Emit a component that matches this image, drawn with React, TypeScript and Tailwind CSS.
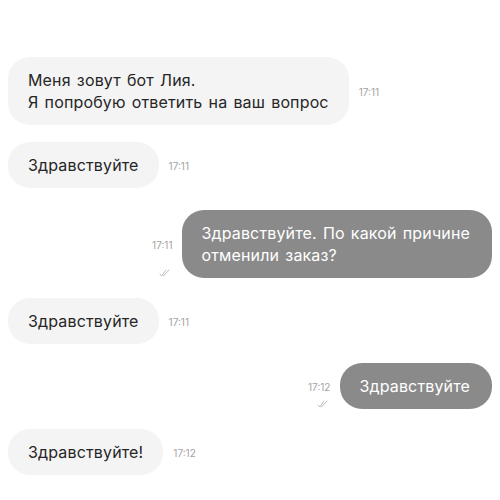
import React from 'react';

const Checks = () => (
  <svg width="12" height="8" viewBox="0 0 12 8" fill="none" stroke="#b5b5b5" strokeWidth="0.9" strokeLinecap="round">
    <path d="M1 5l1.8 2L7 1" />
    <path d="M4.5 7L10 1" />
  </svg>
);

const InBubble = ({ lines, time, mt }: { lines: string[]; time: string; mt: string }) => (
  <div className={`flex items-center ${mt}`}>
    <div className="bg-[#f4f4f4] rounded-[22px] px-5 py-[12px] text-[16px] leading-[22px] text-[#262626] tracking-[0.15px] [word-spacing:1.5px]">
      {lines.map((l) => (
        <div key={l}>{l}</div>
      ))}
    </div>
    <span className="ml-[10px] pt-[2px] text-[10px] text-[#a3a3a3]">{time}</span>
  </div>
);

const OutBubble = ({ lines, time, mt }: { lines: string[]; time: string; mt: string }) => (
  <div className={`flex items-stretch justify-end ${mt}`}>
    <div className="relative flex flex-col justify-center items-end mr-[10px] pt-[2px]">
      <span className="text-[10px] text-[#a3a3a3]">{time}</span>
      <div className="absolute bottom-[1px] right-[1px]">
        <Checks />
      </div>
    </div>
    <div className="bg-[#8a8a8a] rounded-[22px] pl-[19px] pr-[22px] py-[12px] text-[16px] leading-[22px] text-white tracking-[0.15px] [word-spacing:1.5px]">
      {lines.map((l) => (
        <div key={l}>{l}</div>
      ))}
    </div>
  </div>
);

export default function App() {
  return (
    <div className="w-[500px] h-[500px] bg-white overflow-hidden font-['Inter',sans-serif] pl-[8px] pr-[8px] pt-[57px]">
      <InBubble lines={['Меня зовут бот Лия.', 'Я попробую ответить на ваш вопрос']} time="17:11" mt="" />
      <InBubble lines={['Здравствуйте']} time="17:11" mt="mt-[17px]" />
      <OutBubble lines={['Здравствуйте. По какой причине', 'отменили заказ?']} time="17:11" mt="mt-[22px]" />
      <InBubble lines={['Здравствуйте']} time="17:11" mt="mt-[20px]" />
      <OutBubble lines={['Здравствуйте']} time="17:12" mt="mt-[19px]" />
      <InBubble lines={['Здравствуйте!']} time="17:12" mt="mt-[20px]" />
    </div>
  );
}
